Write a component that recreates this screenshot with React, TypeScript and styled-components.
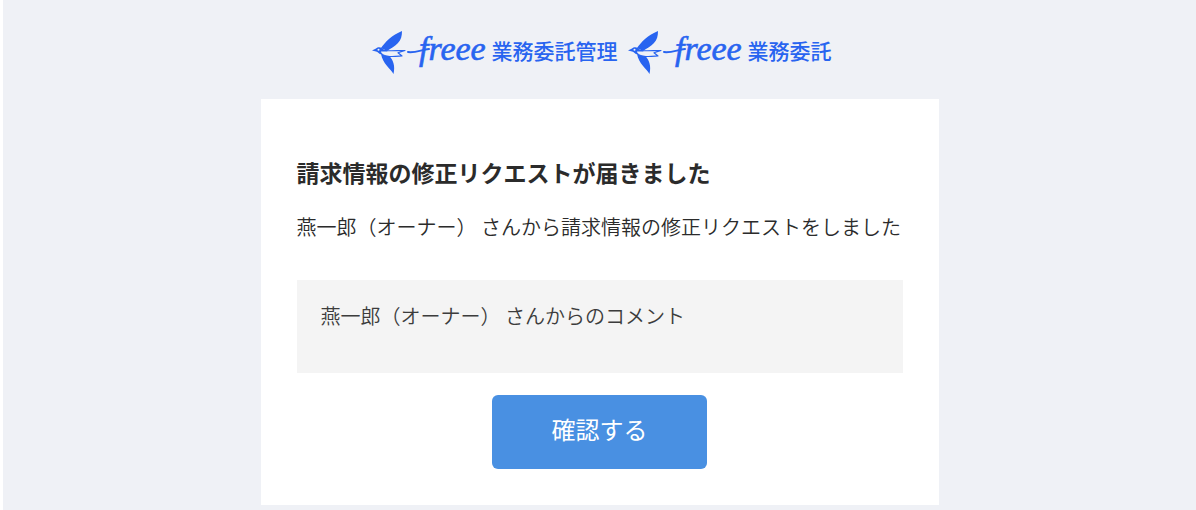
import React from 'react';
import styled, { createGlobalStyle } from 'styled-components';

const GlobalStyle = createGlobalStyle`
  * { box-sizing: border-box; }
  body {
    margin: 0;
    background: #ffffff;
    color: #2b2b2b;
    font-family: 'Noto Sans CJK JP', sans-serif;
  }
`;

const Page = styled.div`
  margin-left: 3px;
  min-height: 100vh;
  padding: 28px 16px 5px;
  background: #eff1f6;
`;

const Header = styled.header`
  display: flex;
  justify-content: center;
  gap: 10px;
  margin-bottom: 23px;
  padding-left: 4px;
`;

const Brand = styled.div`
  display: flex;
  align-items: flex-start;
  gap: 5px;
  height: 48px;
  color: #2864f0;
`;

const ProductName = styled.span`
  font-size: 21px;
  line-height: 44px;
  font-weight: 500;
  white-space: nowrap;
`;

const Card = styled.main`
  max-width: 678px;
  margin: 0 auto;
  padding: 55px 36px 36px;
  background: #ffffff;
`;

const Title = styled.h1`
  margin: 0 0 21px;
  font-size: 23px;
  line-height: 36px;
  font-weight: 700;
`;

const Message = styled.p`
  margin: 0;
  font-size: 20px;
  line-height: 32px;
  font-weight: 350;
`;

const Comment = styled.section`
  margin: 37px 0 22px;
  padding: 20px 24px 41px;
  background: #f4f4f4;
  color: #3c3c3c;
`;

const ConfirmButton = styled.button`
  display: block;
  min-width: 215px;
  height: 74px;
  margin: 0 auto;
  padding: 0 24px 6px;
  border: 0;
  border-radius: 6px;
  background: #4990e2;
  color: #ffffff;
  font-family: inherit;
  font-size: 24px;
  line-height: 36px;
  cursor: pointer;
`;

const Logo = () => (
  <svg width="115" height="48" viewBox="0 0 115 48" aria-label="freee" role="img">
    <path
      fill="currentColor"
      d="M9 20 C13 14 20 7 30 3 C30 8 29 12 26 15 C23 18.500 19 20 15 23 Z M9 26 L17 28 C21 31 23.500 38 21.500 46 C18 40 11 36 9 26 Z"
    />
    <path
      fill="#eff1f6"
      stroke="currentColor"
      strokeWidth="1.2"
      strokeLinejoin="round"
      d="M9 22 C16 23.500 24 22.500 33 22.500 L26 24.800 L30 28 C22 28.500 12 30 8 24 Z"
    />
    <path fill="currentColor" d="M0 22.500 L4 20.500 C6 18.500 10 18.800 12 22 L16 23.500 L9 23.500 L9.500 26.500 C7 26 6 24 4 23.500 Z" />
    <circle cx="6.500" cy="21.800" r="1" fill="#eff1f6" />
    <path fill="none" stroke="currentColor" strokeWidth="2" strokeLinecap="round" d="M36 24 C43 25 49 22 57 21" />
    <text x="47" y="32" fill="currentColor" stroke="currentColor" strokeWidth="0.6" fontFamily="'Liberation Serif', serif" fontStyle="italic" fontSize="34">
      freee
    </text>
  </svg>
);

export default function App() {
  return (
    <>
      <GlobalStyle />
      <Page>
        <Header>
          <Brand>
            <Logo />
            <ProductName>業務委託管理</ProductName>
          </Brand>
          <Brand>
            <Logo />
            <ProductName>業務委託</ProductName>
          </Brand>
        </Header>
        <Card>
          <Title>請求情報の修正リクエストが届きました</Title>
          <Message>燕一郎（オーナー） さんから請求情報の修正リクエストをしました</Message>
          <Comment>
            <Message>燕一郎（オーナー） さんからのコメント</Message>
          </Comment>
          <ConfirmButton type="button">確認する</ConfirmButton>
        </Card>
      </Page>
    </>
  );
}
